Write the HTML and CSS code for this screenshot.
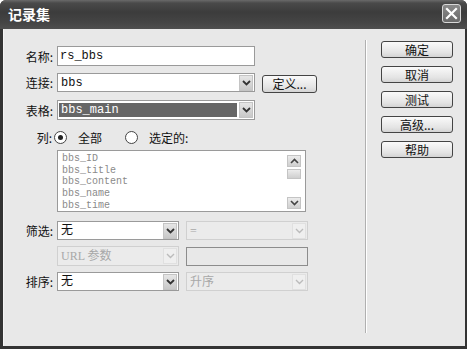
FILE: index.html
```html
<!DOCTYPE html>
<html lang="zh-CN">
<head>
    <meta charset="UTF-8">
    <title>记录集</title>
    <link rel="stylesheet" href="styles.css">
</head>
<body>
    <div class="window">
        <div class="titlebar">
            <span class="title">记录集</span>
            <div class="close">
                <svg width="13" height="13" viewBox="0 0 13 13"><path d="M2 2 L11 11 M11 2 L2 11" stroke="#fff" stroke-width="2.2" stroke-linecap="square"/></svg>
            </div>
        </div>
        <div class="body">
            <div class="form">
                <!-- 名称 -->
                <div class="row row-name">
                    <label class="lbl">名称:</label>
                    <div class="field text wide">rs_bbs</div>
                </div>
                <!-- 连接 -->
                <div class="row row-conn">
                    <label class="lbl">连接:</label>
                    <div class="field select wide">
                        <span class="val">bbs</span>
                        <span class="drop"><svg width="9" height="6" viewBox="0 0 9 6"><path d="M1 1 L4.5 4.5 L8 1" fill="none" stroke="#333" stroke-width="1.8"/></svg></span>
                    </div>
                    <button class="btn btn-def">定义...</button>
                </div>
                <!-- 表格 -->
                <div class="row row-table">
                    <label class="lbl">表格:</label>
                    <div class="field select wide">
                        <span class="val selected">bbs_main</span>
                        <span class="drop"><svg width="9" height="6" viewBox="0 0 9 6"><path d="M1 1 L4.5 4.5 L8 1" fill="none" stroke="#333" stroke-width="1.8"/></svg></span>
                    </div>
                </div>
                <!-- 列 -->
                <div class="row row-cols">
                    <label class="lbl">列:</label>
                    <span class="radio checked"></span>
                    <span class="radio-text">全部</span>
                    <span class="radio"></span>
                    <span class="radio-text">选定的:</span>
                </div>
                <div class="row row-list">
                    <div class="listbox">
                        <div class="items">
                            <div>bbs_ID</div>
                            <div>bbs_title</div>
                            <div>bbs_content</div>
                            <div>bbs_name</div>
                            <div>bbs_time</div>
                        </div>
                        <div class="scroll">
                            <span class="sbtn"><svg width="9" height="6" viewBox="0 0 9 6"><path d="M1 5 L4.5 1.5 L8 5" fill="none" stroke="#444" stroke-width="1.6"/></svg></span>
                            <span class="thumb"></span>
                            <span class="track"></span>
                            <span class="sbtn"><svg width="9" height="6" viewBox="0 0 9 6"><path d="M1 1 L4.5 4.5 L8 1" fill="none" stroke="#444" stroke-width="1.6"/></svg></span>
                        </div>
                    </div>
                </div>
                <!-- 筛选 -->
                <div class="row row-filter">
                    <label class="lbl">筛选:</label>
                    <div class="field select half">
                        <span class="val">无</span>
                        <span class="drop"><svg width="9" height="6" viewBox="0 0 9 6"><path d="M1 1 L4.5 4.5 L8 1" fill="none" stroke="#333" stroke-width="1.8"/></svg></span>
                    </div>
                    <div class="field select half disabled">
                        <span class="val">=</span>
                        <span class="drop"><svg width="9" height="6" viewBox="0 0 9 6"><path d="M1 1 L4.5 4.5 L8 1" fill="none" stroke="#bbb" stroke-width="1.4"/></svg></span>
                    </div>
                </div>
                <div class="row row-url">
                    <span class="lbl"></span>
                    <div class="field select half disabled">
                        <span class="val">URL 参数</span>
                        <span class="drop"><svg width="9" height="6" viewBox="0 0 9 6"><path d="M1 1 L4.5 4.5 L8 1" fill="none" stroke="#bbb" stroke-width="1.4"/></svg></span>
                    </div>
                    <div class="field text half disabled-text"></div>
                </div>
                <!-- 排序 -->
                <div class="row row-sort">
                    <label class="lbl">排序:</label>
                    <div class="field select half">
                        <span class="val">无</span>
                        <span class="drop"><svg width="9" height="6" viewBox="0 0 9 6"><path d="M1 1 L4.5 4.5 L8 1" fill="none" stroke="#333" stroke-width="1.8"/></svg></span>
                    </div>
                    <div class="field select half disabled">
                        <span class="val">升序</span>
                        <span class="drop"><svg width="9" height="6" viewBox="0 0 9 6"><path d="M1 1 L4.5 4.5 L8 1" fill="none" stroke="#bbb" stroke-width="1.4"/></svg></span>
                    </div>
                </div>
            </div>
            <div class="sep"></div>
            <div class="actions">
                <button class="btn">确定</button>
                <button class="btn">取消</button>
                <button class="btn">测试</button>
                <button class="btn">高级...</button>
                <button class="btn">帮助</button>
            </div>
        </div>
    </div>
</body>
</html>
```

FILE: styles.css
```css
body {
    margin: 0;
    font-family: "Liberation Sans", "Noto Sans CJK SC", sans-serif;
    font-size: 12px;
    color: #111;
}
.window {
    width: 467px;
    height: 349px;
    background-color: #333;
    border-radius: 6px 6px 0 0;
    overflow: hidden;
    display: flex;
    flex-direction: column;
}
.titlebar {
    height: 29px;
    display: flex;
    align-items: center;
    justify-content: space-between;
    background: linear-gradient(#6a6a6a 0, #4a4a4a 3px, #3c3c3c 12px, #444 22px, #4e4e4e 29px);
}
.title {
    color: #fff;
    font-weight: bold;
    font-size: 14px;
    font-family: "Noto Sans CJK SC", sans-serif;
    padding-left: 8px;
    margin-top: -1px;
}
.close {
    width: 17px;
    height: 17px;
    margin-right: 6px;
    margin-top: -2px;
    border: 1px solid #d8d8d8;
    border-radius: 3px;
    background: linear-gradient(#8a8a8a, #6a6a6a);
    display: flex;
    align-items: center;
    justify-content: center;
}
.body {
    flex: 1;
    display: flex;
    background-color: #e8e8e8;
    margin: 0 2px 3px 3px;
    border-left: 1px solid #f4f4f4;
}
.form {
    width: 361px;
    display: flex;
    flex-direction: column;
    padding-top: 17px;
}
.row {
    display: flex;
    align-items: center;
}
.lbl {
    width: 49px;
    text-align: right;
    padding-right: 4px;
    font-family: "Noto Sans CJK SC", sans-serif;
    font-size: 12px;
    flex-shrink: 0;
}
.field {
    box-sizing: border-box;
    height: 20px;
    border: 1px solid #9a9a9a;
    background-color: #fff;
    font-family: "Liberation Mono", "Noto Sans CJK SC", monospace;
    font-size: 12px;
    display: flex;
    align-items: center;
}
.text {
    padding-left: 2px;
}
.wide {
    width: 198px;
}
.half {
    width: 122px;
    margin-right: 7px;
}
.select .val {
    flex: 1;
    padding-left: 2px;
    height: 14px;
    line-height: 14px;
    margin: 0 2px 0 1px;
}
.select .selected {
    background-color: #666;
    color: #fff;
}
.drop {
    width: 14px;
    height: 16px;
    margin-right: 1px;
    box-sizing: border-box;
    border: 1px solid #c4c4c4;
    background: linear-gradient(#e6e6e6, #c8c8c8);
    display: flex;
    align-items: center;
    justify-content: center;
}
.disabled {
    background-color: #ebebeb;
    border-color: #d0d0d0;
    color: #a8a8a8;
    font-family: "Liberation Serif", "Noto Sans CJK SC", serif;
}
.disabled .drop {
    background: #efefef;
    border-color: #e0e0e0;
}
.disabled-text {
    background-color: #e8e8e8;
    border-color: #8c8c8c;
    height: 19px;
}
.row-conn {
    margin-top: 7px;
    height: 19px;
}
.row-conn .field {
    height: 19px;
}
.row-table {
    margin-top: 8px;
}
.row-cols {
    margin-top: 10px;
    height: 15px;
}
.row-cols .lbl {
    width: 48px;
    padding-right: 2px;
}
.radio {
    width: 11px;
    height: 11px;
    border: 1px solid #444;
    border-radius: 50%;
    background-color: #fff;
    position: relative;
}
.radio.checked::after {
    content: "";
    position: absolute;
    left: 3px;
    top: 3px;
    width: 5px;
    height: 5px;
    border-radius: 50%;
    background-color: #222;
}
.radio-text {
    font-family: "Noto Sans CJK SC", sans-serif;
    margin: 0 23px 0 11px;
}
.row-list {
    margin-top: 5px;
    padding-left: 53px;
}
.listbox {
    box-sizing: border-box;
    width: 249px;
    height: 62px;
    border: 1px solid #9a9a9a;
    background-color: #fff;
    display: flex;
    padding: 2px 4px 2px 3px;
}
.items {
    flex: 1;
    color: #8a8a8a;
    font-family: "Liberation Mono", monospace;
    font-size: 10px;
    line-height: 11.7px;
    padding-left: 1px;
}
.scroll {
    width: 14px;
    display: flex;
    flex-direction: column;
    gap: 2px;
    padding-top: 2px;
}
.sbtn, .thumb {
    box-sizing: border-box;
    height: 12px;
    border: 1px solid #c4c4c4;
    background: linear-gradient(#ececec, #cfcfcf);
    display: flex;
    align-items: center;
    justify-content: center;
}
.thumb {
    height: 10px;
}
.track {
    flex: 1;
}
.row-filter {
    margin-top: 9px;
    height: 19px;
}
.row-filter .field, .row-sort .field {
    height: 19px;
}
.row-url {
    margin-top: 6px;
}
.row-sort {
    margin-top: 6px;
    height: 19px;
}
.sep {
    width: 1px;
    margin: 11px 0 13px;
    background-color: #b0b0b0;
    border-right: 1px solid #fff;
}
.actions {
    display: flex;
    flex-direction: column;
    gap: 8px;
    padding: 12px 0 0 14px;
}
.btn {
    box-sizing: border-box;
    width: 72px;
    height: 17px;
    padding: 0;
    border: 1px solid #444;
    border-radius: 3px;
    background: linear-gradient(#fafafa, #e4e4e4 70%, #d4d4d4);
    font-family: "Noto Sans CJK SC", sans-serif;
    font-size: 12px;
    line-height: 15px;
    color: #111;
}
.btn-def {
    width: 55px;
    height: 18px;
    margin-left: 7px;
    margin-top: 2px;
}
```
